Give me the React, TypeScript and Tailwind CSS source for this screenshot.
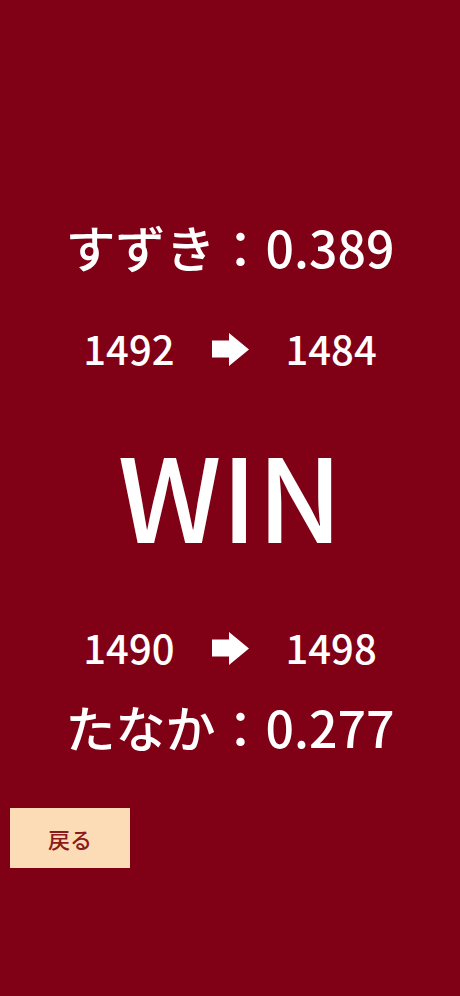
import React from "react";

const font = { fontFamily: '"Noto Sans CJK JP", "Noto Sans", sans-serif' };

function Arrow() {
  return (
    <svg width="37" height="33" viewBox="0 0 37 33" className="block">
      <path d="M0 7.5 H17 V0 L37 16.5 L17 33 V24.5 H0 Z" fill="#ffffff" />
    </svg>
  );
}

function RateRow({ from, to }: { from: string; to: string }) {
  return (
    <div className="flex h-[50px] items-center justify-center gap-[37px] text-[40px] font-medium leading-[50px] text-white">
      <span className="-mt-[3px]">{from}</span>
      <Arrow />
      <span className="-mt-[3px]">{to}</span>
    </div>
  );
}

export default function App() {
  return (
    <div
      className="flex min-h-[996px] w-full flex-col bg-[#800016] text-white"
      style={font}
    >
      <div className="mt-[216px] flex h-[60px] items-center justify-center text-[50px] font-medium leading-[60px]">
        すずき：0.389
      </div>
      <div className="mt-[48px]">
        <RateRow from="1492" to="1484" />
      </div>
      <div className="mt-[53px] flex h-[130px] items-center justify-center text-[116px] font-medium leading-[130px]">
        WIN
      </div>
      <div className="mt-[66px]">
        <RateRow from="1490" to="1498" />
      </div>
      <div className="mt-[23px] flex h-[60px] items-center justify-center text-[50px] font-medium leading-[60px]">
        たなか：0.277
      </div>
      <div className="mt-[52px] px-[10px]">
        <button className="flex h-[60px] w-[120px] items-center justify-center bg-[#fcdcb6] text-[22px] font-medium text-[#8b1a1a]">
          戻る
        </button>
      </div>
    </div>
  );
}
